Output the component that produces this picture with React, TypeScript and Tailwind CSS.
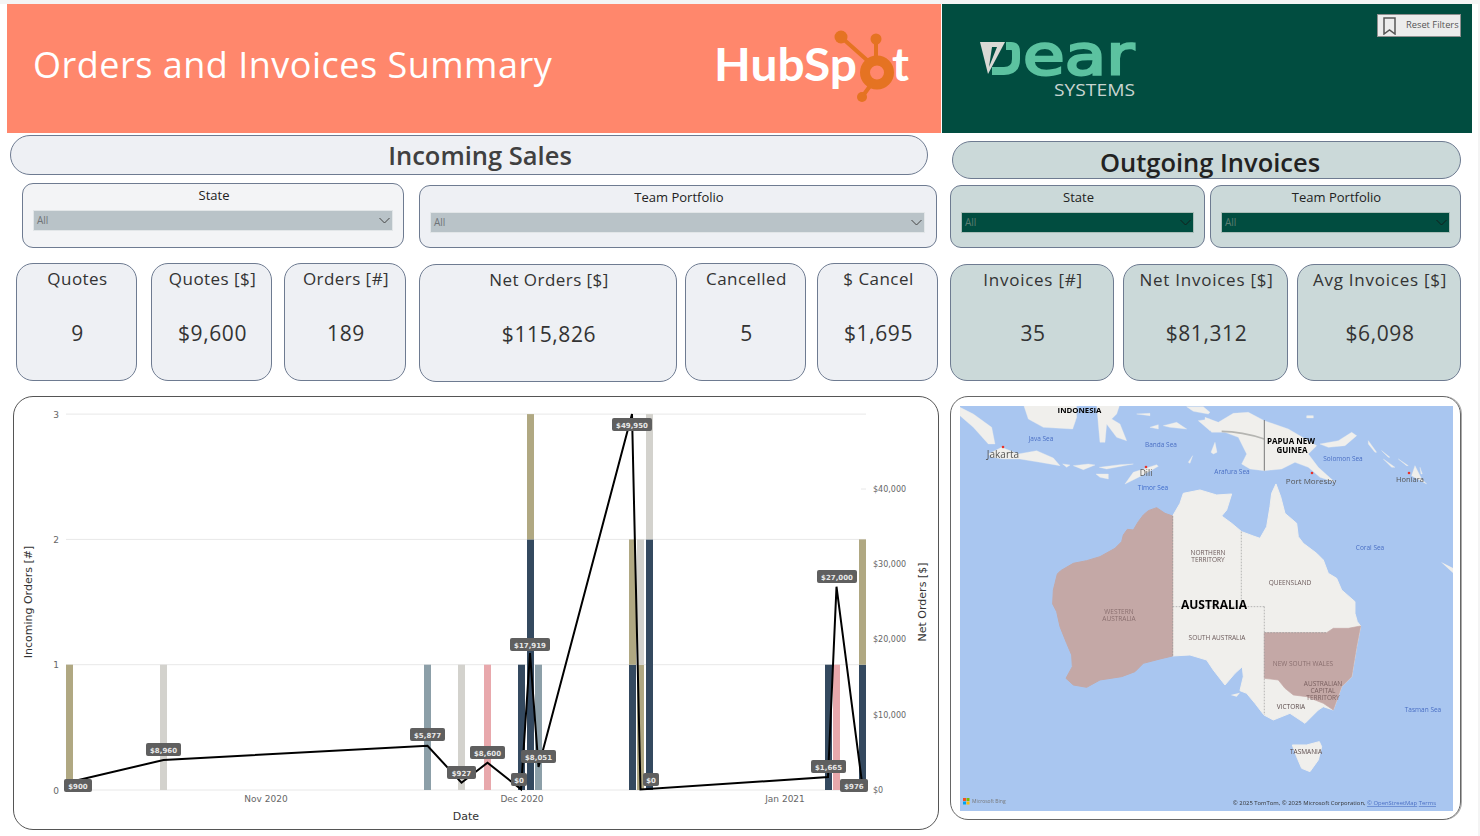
import React from "react";

const sans = "font-['Open_Sans',sans-serif]";

const KpiCard = ({ title, value, className, outgoing }: { title: string; value: string; className: string; outgoing?: boolean }) => (
  <div className={`flex flex-col items-center rounded-[17px] border border-[#6e7b91] pl-[2px] text-[#333] ${className}`}>
    <div className={`mt-[3px] text-[17px] leading-[24px] whitespace-nowrap ${outgoing ? "tracking-[0.75px]" : "tracking-[0.45px]"}`}>{title}</div>
    <div className={`text-[21px] leading-[30px] tracking-[0.6px] whitespace-nowrap ${outgoing ? "mt-[26px]" : "mt-[27px]"}`}>{value}</div>
  </div>
);

const Slicer = ({ title, dark, className, inset }: { title: string; dark?: boolean; className: string; inset: string }) => (
  <div className={`rounded-[11px] border border-[#6e7b91] ${className}`}>
    <div className="mt-[2px] pl-[2px] text-center text-[13px] leading-[18px] text-[#222]">{title}</div>
    <div
      className={`mt-[6px] flex h-[21px] items-center justify-between border pl-[3px] pr-[2px] text-[10px] ${inset} ${
        dark ? "border-[#a9bdb8] bg-[#014d40] text-[#5d7d72]" : "border-[#e2e6e8] bg-[#b9c3c8] text-[#6f7478]"
      }`}
    >
      <span>All</span>
      <svg width="11" height="7" viewBox="0 0 11 7">
        <path d="M.5 1l5 5 5-5" fill="none" stroke={dark ? "#12211d" : "#444"} strokeWidth="1" />
      </svg>
    </div>
  </div>
);

const HubSpotLogo = () => (
  <svg viewBox="712 25 203 80" className="mr-[26px] mt-[-6px] h-[80px] w-[203px] shrink-0">
    <g fill="#ffffff" fontFamily="Lato, sans-serif" fontWeight="700" fontSize="45">
      <text x="714" y="80" textLength="143" lengthAdjust="spacingAndGlyphs">HubSp</text>
      <text x="892" y="80" textLength="17" lengthAdjust="spacingAndGlyphs">t</text>
    </g>
    <g stroke="#e57322" fill="none">
      <path d="M841 36L868 60M876 38V58M870 85L862 96" strokeWidth="4" />
      <circle cx="877" cy="71.5" r="12" strokeWidth="10" />
    </g>
    <g fill="#e57322">
      <circle cx="841" cy="36" r="6.5" />
      <circle cx="876" cy="38" r="5.5" />
      <circle cx="862" cy="96" r="5" />
    </g>
  </svg>
);

const DearLogo = () => (
  <svg viewBox="975 14 165 87" className="ml-[33px] mt-[10px] h-[87px] w-[165px] shrink-0">
    <path d="M980 42h25l-17 32z" fill="#dad9d5" />
    <path d="M992 47h5l-8 20z" fill="#014d40" />
    <path d="M1006 46h5q5 0 5 6v7q0 12-12 12h-12" fill="none" stroke="#5cc2a0" strokeWidth="8" />
    <text x="1023" y="74" fontFamily="DejaVu Sans, sans-serif" fontSize="56" fill="#5cc2a0" stroke="#5cc2a0" strokeWidth="2.5" textLength="111" lengthAdjust="spacingAndGlyphs">ear</text>
    <text x="1054" y="96" fontFamily="Open Sans, sans-serif" fontSize="17" fill="#c8d4d0" textLength="81" lengthAdjust="spacingAndGlyphs">SYSTEMS</text>
  </svg>
);

const ResetButton = () => (
  <div className="mr-[11px] mt-[10px] flex h-[23px] w-[84px] shrink-0 items-center border border-[#8f8f8f] bg-[#ececec] pl-[5px]">
    <svg width="13" height="18" viewBox="0 0 13 18">
      <path d="M1 1h11v16l-5.5-4L1 17z" fill="none" stroke="#555" strokeWidth="1.5" />
    </svg>
    <span className="mb-[2px] ml-[10px] whitespace-nowrap text-[9.3px] text-[#555]">Reset Filters</span>
  </div>
);

const bars: { x: number; from: number; to: number; fill: string }[] = [
  { x: 66, from: 0, to: 1, fill: "#b0a882" },
  { x: 160, from: 0, to: 1, fill: "#d3d2cd" },
  { x: 424, from: 0, to: 1, fill: "#8c9fa8" },
  { x: 458, from: 0, to: 1, fill: "#d3d2cd" },
  { x: 484, from: 0, to: 1, fill: "#e8a8ac" },
  { x: 518, from: 0, to: 1, fill: "#34495f" },
  { x: 527, from: 0, to: 2, fill: "#34495f" },
  { x: 527, from: 2, to: 3, fill: "#b0a882" },
  { x: 535, from: 0, to: 1, fill: "#8c9fa8" },
  { x: 629, from: 0, to: 1, fill: "#34495f" },
  { x: 629, from: 1, to: 2, fill: "#b0a882" },
  { x: 637, from: 0, to: 1, fill: "#b0a882" },
  { x: 637, from: 1, to: 2, fill: "#d3d2cd" },
  { x: 646, from: 0, to: 2, fill: "#34495f" },
  { x: 646, from: 2, to: 3, fill: "#d3d2cd" },
  { x: 825, from: 0, to: 1, fill: "#34495f" },
  { x: 833, from: 0, to: 1, fill: "#e8a8ac" },
  { x: 859, from: 0, to: 1, fill: "#34495f" },
  { x: 859, from: 1, to: 2, fill: "#b0a882" },
];

const yOf = (n: number) => 790 - n * 125.3;

const line =
  "70,782 163.5,760 427.5,745.7 461.5,782.7 487.5,762.7 521,789.3 530,653 538.5,767 632,414 640.5,789.5 828,777 836.5,586.7 862,782.7";

const labels: { text: string; x1: number; x2: number; y: number }[] = [
  { text: "$49,950", x1: 612, x2: 652, y: 418 },
  { text: "$8,960", x1: 146, x2: 181, y: 743 },
  { text: "$5,877", x1: 410, x2: 445, y: 728 },
  { text: "$8,600", x1: 470, x2: 505, y: 746 },
  { text: "$0", x1: 511, x2: 527, y: 773 },
  { text: "$17,919", x1: 510, x2: 550, y: 638 },
  { text: "$8,051", x1: 521, x2: 556, y: 750 },
  { text: "$0", x1: 643, x2: 659, y: 773 },
  { text: "$1,665", x1: 811, x2: 846, y: 760 },
  { text: "$27,000", x1: 817, x2: 857, y: 570 },
  { text: "$900", x1: 64, x2: 92, y: 779 },
  { text: "$927", x1: 447, x2: 476, y: 766 },
  { text: "$976", x1: 840, x2: 868, y: 779 },
];

const ChartLabel = ({ text, x1, x2, y }: { text: string; x1: number; x2: number; y: number }) => (
  <g>
    <rect x={x1} y={y} width={x2 - x1} height={13} rx="2" fill="#5f5f5f" />
    <text x={(x1 + x2) / 2} y={y + 9.5} textAnchor="middle" fontSize="7" fontWeight="700" fill="#e8e8e8">{text}</text>
  </g>
);

const ComboChart = () => (
  <svg viewBox="14 397 924 432" className="block h-[432px] w-[924px]" fontFamily="DejaVu Sans, sans-serif">
    {[0, 1, 2, 3].map((n) => (
      <g key={n}>
        <line x1="66" x2="866" y1={yOf(n)} y2={yOf(n)} stroke="#e8e8e8" />
        <text x="56" y={yOf(n) + 3.5} textAnchor="middle" fontSize="9" fill="#666">{n}</text>
      </g>
    ))}
    <line x1="861" x2="866" y1="489" y2="489" stroke="#e8e8e8" />
    {bars.map((b, i) => (
      <rect key={i} x={b.x} y={yOf(b.to)} width="7" height={yOf(b.from) - yOf(b.to)} fill={b.fill} />
    ))}
    {[
      ["$40,000", 489],
      ["$30,000", 564],
      ["$20,000", 639],
      ["$10,000", 715],
      ["$0", 790],
    ].map(([t, y]) => (
      <text key={t} x="873" y={Number(y) + 3} fontSize="8" fill="#666">{t}</text>
    ))}
    <text x="266" y="802" textAnchor="middle" fontSize="9" fill="#666">Nov 2020</text>
    <text x="522" y="802" textAnchor="middle" fontSize="9" fill="#666">Dec 2020</text>
    <text x="785" y="802" textAnchor="middle" fontSize="9" fill="#666">Jan 2021</text>
    <text x="466" y="820" textAnchor="middle" fontSize="11" fill="#333">Date</text>
    <text transform="translate(32 602) rotate(-90)" textAnchor="middle" fontSize="11" fill="#333">Incoming Orders [#]</text>
    <text transform="translate(926 602) rotate(-90)" textAnchor="middle" fontSize="11" fill="#333">Net Orders [$]</text>
    <polyline points={line} fill="none" stroke="#000" strokeWidth="2" />
    {labels.map((l, i) => <ChartLabel key={i} {...l} />)}
  </svg>
);

const mainlandWest = "398,108 375,100 350,83 325,92 310,105 295,125 280,150 262,148 250,165 245,185 225,205 180,230 140,242 100,250 62,272 52,282 45,310 40,330 38,372 50,395 60,440 80,490 95,525 97,560 78,595 100,615 140,622 180,600 245,590 285,575 310,550 360,537 398,528";
const mainlandEast = "398,108 420,70 430,40 480,30 530,45 575,42 560,90 545,108 575,130 605,155 640,168 660,175 680,140 690,80 695,40 708,12 722,50 735,100 770,130 775,170 790,190 830,220 850,240 865,280 890,295 905,330 945,365 945,400 952,425 962,438 950,500 935,590 905,620 880,690 850,680 835,690 795,730 750,700 700,720 672,705 645,670 620,640 600,632 610,590 607,560 585,580 555,615 520,570 500,540 450,525 398,528";
const nsw = "673,458 860,458 880,445 925,445 962,438 950,500 935,590 905,620 880,690 850,670 800,650 760,645 735,625 715,600 673,595";
const tasmania = "757,795 800,795 838,785 845,800 835,840 810,875 785,865 770,830";

const westIslands = [
  "0,10 40,30 95,70 105,120 85,120 40,70 0,35",
  "190,0 350,0 350,40 338,75 250,70 205,45",
  "410,0 480,0 470,30 455,45 480,60 500,110 470,100 440,60 435,115 420,115 415,60",
  "85,150 125,130 175,150 230,140 280,162 300,185 240,175 180,165 130,165 95,160",
  "308,180 330,183 320,190",
  "340,185 385,180 405,183 370,197",
  "418,190 480,182 520,180 440,195",
  "408,210 445,210 445,225 420,220",
  "495,240 520,205 590,182 595,187 545,215",
  "570,70 595,62 595,75",
  "610,65 650,55 680,75 630,70",
  "530,30 570,28 570,35",
  "685,175 698,155 690,178",
  "680,8 730,8 750,25 745,30 700,22",
  "715,50 750,45 750,80",
];

const eastIslands = [
  "0,40 40,55 85,28 130,25 178,50 250,75 310,110 335,125 310,150 340,190 390,235 345,220 310,190 270,175 230,195 178,200 135,195 110,180 125,150 100,100 60,85 20,85 0,60",
  "345,120 400,110 440,85 455,95 420,125 370,130",
  "18,145 30,115 36,145 25,150",
  "305,35 325,35 325,42 305,42",
  "490,110 515,145 510,145 490,120",
  "530,140 555,160 550,160",
  "535,165 570,190 560,190",
  "580,165 610,185 605,185",
  "630,185 650,225 665,240 620,215",
  "645,190 652,210 648,210",
];

const MapText = ({ x, y, size, fill, bold, children }: { x: number; y: number; size: number; fill: string; bold?: boolean; children: string }) => (
  <text x={x} y={y} textAnchor="middle" fontSize={size} fill={fill} fontWeight={bold ? 700 : 400}>{children}</text>
);

const AustraliaMap = () => (
  <svg viewBox="960 406 493 405" className="block h-[405px] w-[493px] blur-[0.3px]" fontFamily="Open Sans, sans-serif">
    <rect x="960" y="406" width="493" height="405" fill="#a9c6f0" />
    <g transform="translate(960 404) scale(.3333)" fill="#f0efec" stroke="#f0efec" strokeLinejoin="round">
      {westIslands.map((p) => <polygon key={p} points={p} />)}
    </g>
    <g transform="translate(1205 404) scale(.3333)" fill="#f0efec" stroke="#f0efec" strokeLinejoin="round">
      {eastIslands.map((p) => <polygon key={p} points={p} />)}
      <path d="M50 82Q110 82 178 105" fill="none" stroke="#b5b5b2" strokeWidth="5" />
      <path d="M178 48V200" fill="none" stroke="#777" strokeWidth="3" />
    </g>
    <polygon points="1441,562 1453,568 1453,573" fill="#f0efec" />
    <g transform="translate(1040 480) scale(.3333)" strokeLinejoin="round">
      <polygon points={mainlandEast} fill="#f0efec" stroke="#f0efec" strokeWidth="3" />
      <polygon points={mainlandWest} fill="#c4a8a6" stroke="#c4a8a6" strokeWidth="3" />
      <polygon points={nsw} fill="#c4a8a6" stroke="#c4a8a6" strokeWidth="2" />
      <polygon points={tasmania} fill="#f0efec" stroke="#f0efec" strokeWidth="3" />
      <polygon points="572,645 600,638 590,650" fill="#f0efec" />
      <path d="M398 108V528M398 380H673M604 155V380M673 380V705M673 458H860" fill="none" stroke="#999" strokeWidth="2" strokeDasharray="5 4" />
    </g>
    <g fill="#e8332a">
      <circle cx="1003" cy="447" r="1.3" />
      <circle cx="1146" cy="467" r="1.3" />
      <circle cx="1312" cy="473" r="1.3" />
      <circle cx="1409" cy="473" r="1.3" />
    </g>
    <MapText x={1079.5} y={413} size={7.8} fill="#000" bold>INDONESIA</MapText>
    <MapText x={1041} y={441} size={6.5} fill="#4a6fc4">Java Sea</MapText>
    <MapText x={1161} y={447} size={6.5} fill="#4a6fc4">Banda Sea</MapText>
    <MapText x={1003} y={458} size={10} fill="#555">Jakarta</MapText>
    <MapText x={1146} y={476} size={8.5} fill="#555">Dili</MapText>
    <MapText x={1153} y={490} size={6.5} fill="#3f6ccc">Timor Sea</MapText>
    <MapText x={1232} y={474} size={6.5} fill="#4a6fc4">Arafura Sea</MapText>
    <MapText x={1291} y={444} size={8} fill="#000" bold>PAPUA NEW</MapText>
    <MapText x={1292} y={452.5} size={8} fill="#000" bold>GUINEA</MapText>
    <MapText x={1343} y={461} size={6.5} fill="#4a6fc4">Solomon Sea</MapText>
    <MapText x={1311} y={484} size={8} fill="#555">Port Moresby</MapText>
    <MapText x={1410} y={482} size={7.5} fill="#555">Honiara</MapText>
    <MapText x={1370} y={550} size={6.5} fill="#4a6fc4">Coral Sea</MapText>
    <MapText x={1423} y={712} size={6.5} fill="#4a6fc4">Tasman Sea</MapText>
    <MapText x={1208} y={555} size={6.5} fill="#6b5a5a">NORTHERN</MapText>
    <MapText x={1208} y={562} size={6.5} fill="#6b5a5a">TERRITORY</MapText>
    <MapText x={1290} y={585} size={6.5} fill="#6b5a5a">QUEENSLAND</MapText>
    <MapText x={1214} y={609} size={12} fill="#000" bold>AUSTRALIA</MapText>
    <MapText x={1119} y={614} size={6.5} fill="#8a6f6f">WESTERN</MapText>
    <MapText x={1119} y={621} size={6.5} fill="#8a6f6f">AUSTRALIA</MapText>
    <MapText x={1217} y={640} size={6.5} fill="#6b5a5a">SOUTH AUSTRALIA</MapText>
    <MapText x={1303} y={666} size={6.5} fill="#8a6f6f">NEW SOUTH WALES</MapText>
    <MapText x={1323} y={686} size={6.5} fill="#7a6060">AUSTRALIAN</MapText>
    <MapText x={1323} y={693} size={6.5} fill="#7a6060">CAPITAL</MapText>
    <MapText x={1323} y={700} size={6.5} fill="#7a6060">TERRITORY</MapText>
    <MapText x={1291} y={709} size={6.5} fill="#5a4a4a">VICTORIA</MapText>
    <MapText x={1306} y={754} size={6.5} fill="#5a4a4a">TASMANIA</MapText>
    <g>
      <rect x="963" y="798" width="3" height="3" fill="#f25022" />
      <rect x="966.5" y="798" width="3" height="3" fill="#7fba00" />
      <rect x="963" y="801.5" width="3" height="3" fill="#00a4ef" />
      <rect x="966.5" y="801.5" width="3" height="3" fill="#ffb900" />
    </g>
    <text x="972" y="803" fontSize="5" fill="#777">Microsoft Bing</text>
    <text x="1436" y="805" textAnchor="end" fontSize="5.9" fill="#333">
      © 2025 TomTom, © 2025 Microsoft Corporation, <tspan fill="#4a6fc4" textDecoration="underline">© OpenStreetMap</tspan>  <tspan fill="#4a6fc4" textDecoration="underline">Terms</tspan>
    </text>
  </svg>
);

export default function App() {
  return (
    <div className={`h-[836px] w-[1480px] overflow-hidden border-r-2 border-t-4 border-[#f4f4f4] bg-white ${sans}`}>
      <div className="flex">
        <div className="ml-[7px] flex h-[129px] w-[934px] items-center justify-between bg-[#ff876c] pl-[26px]">
          <div className="pb-[8px] text-[36px] leading-[48px] tracking-[0.5px] text-white whitespace-nowrap">Orders and Invoices Summary</div>
          <HubSpotLogo />
        </div>
        <div className="ml-px flex h-[129px] w-[530px] items-start justify-between bg-[#014d40]">
          <DearLogo />
          <ResetButton />
        </div>
      </div>

      <div className="flex">
        <div className="w-[942px] shrink-0">
          <div className="ml-[10px] mt-[2px] flex h-[40px] w-[918px] items-center justify-center rounded-[20px] border border-[#6e7b91] bg-[#eef0f4] pl-[22px] text-[25.5px] font-semibold text-[#404040]">
            Incoming Sales
          </div>
          <div className="mt-[8px] flex h-[65px] items-start">
            <Slicer title="State" className="ml-[22px] h-[65px] w-[382px] bg-[#f3f4f6]" inset="ml-[10px] mr-[10px]" />
            <Slicer title="Team Portfolio" className="ml-[15px] mt-[2px] h-[63px] w-[518px] bg-[#eef0f4]" inset="ml-[10px] mr-[11px]" />
          </div>
          <div className="mt-[15px] flex h-[119px] items-start">
            <KpiCard title="Quotes" value="9" className="ml-[16px] h-[118px] w-[121px] bg-[#eef0f4]" />
            <KpiCard title="Quotes [$]" value="$9,600" className="ml-[14px] h-[118px] w-[121px] bg-[#eef0f4]" />
            <KpiCard title="Orders [#]" value="189" className="ml-[12px] h-[118px] w-[122px] bg-[#eef0f4]" />
            <KpiCard title="Net Orders [$]" value="$115,826" className="ml-[13px] mt-px h-[118px] w-[258px] bg-[#eef0f4]" />
            <KpiCard title="Cancelled" value="5" className="ml-[8px] h-[118px] w-[121px] bg-[#eef0f4]" />
            <KpiCard title="$ Cancel" value="$1,695" className="ml-[11px] h-[118px] w-[121px] bg-[#eef0f4]" />
          </div>
          <div className="ml-[13px] mt-[14px] h-[434px] w-[926px] overflow-hidden rounded-[20px] border border-[#555]">
            <ComboChart />
          </div>
        </div>

        <div className="flex-1">
          <div className="ml-[10px] mt-[8px] flex h-[38px] w-[509px] items-center justify-center rounded-[19px] border border-[#6e7b91] bg-[#cbd9d9] pl-[7px] pt-[4px] text-[25.5px] font-semibold text-[#222]">
            Outgoing Invoices
          </div>
          <div className="mt-[6px] flex h-[63px] items-start">
            <Slicer dark title="State" className="ml-[8px] h-[63px] w-[255px] bg-[#cbd9d9]" inset="mx-[10px]" />
            <Slicer dark title="Team Portfolio" className="ml-[5px] h-[63px] w-[251px] bg-[#cbd9d9]" inset="mx-[10px]" />
          </div>
          <div className="mt-[16px] flex h-[117px] items-start">
            <KpiCard outgoing title="Invoices [#]" value="35" className="ml-[8px] h-[117px] w-[164px] bg-[#cbd9d9]" />
            <KpiCard outgoing title="Net Invoices [$]" value="$81,312" className="ml-[9px] h-[117px] w-[165px] bg-[#cbd9d9]" />
            <KpiCard outgoing title="Avg Invoices [$]" value="$6,098" className="ml-[9px] h-[117px] w-[164px] bg-[#cbd9d9]" />
          </div>
          <div className="ml-[8px] mt-[15px] h-[424px] w-[511px] overflow-hidden rounded-[18px] border border-[#666] pl-[9px] pt-[9px] shadow-[1px_0_0_#aaa]">
            <AustraliaMap />
          </div>
        </div>
      </div>
    </div>
  );
}
